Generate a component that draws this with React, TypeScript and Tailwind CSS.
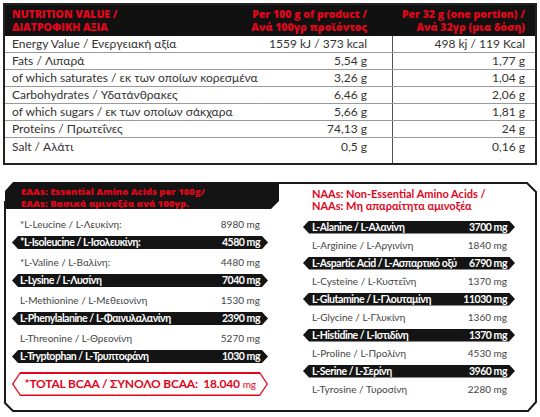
import React from 'react';

const nutrition = [
  ['Energy Value / Ενεργειακή αξία', '1559 kJ / 373 kcal', '498 kj / 119 Kcal'],
  ['Fats / Λιπαρά', '5,54 g', '1,77 g'],
  ['of which saturates / εκ των οποίων κορεσμένα', '3,26 g', '1,04 g'],
  ['Carbohydrates / Υδατάνθρακες', '6,46 g', '2,06 g'],
  ['of which sugars / εκ των οποίων σάκχαρα', '5,66 g', '1,81 g'],
  ['Proteins / Πρωτεΐνες', '74,13 g', '24 g'],
  ['Salt / Αλάτι', '0,5 g', '0,16 g'],
];

const eaas: [string, string, boolean][] = [
  ['*L-Leucine / L-Λευκίνη:', '8980 mg', false],
  ['*L-Isoleucine / L-Ισολευκίνη:', '4580 mg', true],
  ['*L-Valine  / L-Βαλίνη:', '4480 mg', false],
  ['L-Lysine / L-Λυσίνη', '7040 mg', true],
  ['L-Methionine / L-Μεθειονίνη', '1530 mg', false],
  ['L-Phenylalanine / L-Φαινυλαλανίνη', '2390 mg', true],
  ['L-Threonine / L-Θρεονίνη', '5270 mg', false],
  ['L-Tryptophan / L-Τρυπτοφάνη', '1030 mg', true],
];

const naas: [string, string, boolean][] = [
  ['L-Alanine / L-Αλανίνη', '3700 mg', true],
  ['L-Arginine / L-Αργινίνη', '1840 mg', false],
  ['L-Aspartic Acid / L-Ασπαρτικό οξύ', '6790 mg', true],
  ['L-Cysteine / L-Κυστεΐνη', '1370 mg', false],
  ['L-Glutamine / L-Γλουταμίνη', '11030 mg', true],
  ['L-Glycine / L-Γλυκίνη', '1360 mg', false],
  ['L-Histidine / L-Ιστιδίνη', '1370 mg', true],
  ['L-Proline / L-Προλίνη', '4530 mg', false],
  ['L-Serine / L-Σερίνη', '3960 mg', true],
  ['L-Tyrosine / Τυροσίνη', '2280 mg', false],
];

function AminoRow({ label, value, dark, h, pad }: { label: string; value: string; dark: boolean; h: string; pad: string }) {
  if (dark) {
    return (
      <div className={`${h} flex items-center`}>
        <div className={`flex h-[13px] w-full items-center justify-between bg-[#141414] ${pad} whitespace-nowrap text-[10.5px] font-bold leading-none tracking-[-0.45px] text-white [clip-path:polygon(6px_0,calc(100%_-_6px)_0,100%_50%,calc(100%_-_6px)_100%,6px_100%,0_50%)]`}>
          <span>{label}</span>
          <span>{value}</span>
        </div>
      </div>
    );
  }
  return (
    <div className={`${h} flex items-center justify-between ${pad} whitespace-nowrap text-[10px] leading-none text-[#444]`}>
      <span>{label}</span>
      <span>{value}</span>
    </div>
  );
}

export default function App() {
  return (
    <div className="h-[417px] w-[540px] overflow-hidden bg-white font-['Lato',sans-serif]">
      {/* Nutrition table */}
      <div className="mx-[3px] mt-[3px] border-2 border-[#222]">
        <div className="flex h-[31px] items-center bg-[#111] font-['Open_Sans',sans-serif] text-[10.5px] font-extrabold leading-[13px] text-[#e2061b]">
          <div className="flex flex-1 justify-between pl-[7px] pr-[25px]">
            <div>NUTRITION VALUE /<br />ΔΙΑΤΡΟΦΙΚΗ ΑΞΙΑ</div>
            <div className="text-right">Per 100 g of product /<br />Ανά 100γρ προϊόντος</div>
          </div>
          <div className="w-[143px] pr-[10px] text-right">Per 32 g (one portion) /<br />Ανά 32γρ (μια δόση)</div>
        </div>
        {nutrition.map(([label, a, b], i) => (
          <div key={label} className={`flex h-[17px] text-[12px] leading-none text-[#333] ${i < nutrition.length - 1 ? 'border-b border-[#9a9a9a]' : ''}`}>
            <div className="flex flex-1 items-center justify-between pl-[7px] pr-[25px]">
              <span>{label}</span>
              <span>{a}</span>
            </div>
            <div className="flex w-[143px] items-center justify-end border-l border-[#555] pr-[10px]">{b}</div>
          </div>
        ))}
        <div className="flex h-[8px]">
          <div className="flex-1" />
          <div className="w-[143px] border-l border-[#555]" />
        </div>
      </div>

      {/* Amino acids panel */}
      <div className="relative mt-[16px] h-[234px]">
        <svg className="absolute inset-0" width="540" height="234" viewBox="0 0 540 234" fill="none">
          <polygon points="13,1 279,1 279,20 271,28 5,28 5,10" fill="#141414" />
          <path d="M279 2 H527 L536 11 V221 L528 230 H13 L5 222 V20" stroke="#1a1a1a" strokeWidth="2" />
        </svg>
        <div className="relative flex">
          <div className="w-[272px]">
            <div className="h-[33px] pl-[21px] pt-[5px] font-['Open_Sans',sans-serif] text-[9.5px] font-extrabold leading-[12px] text-[#e2061b]">
              EAAs: Essential Amino Acids per 100g/<br />EAAs: Βασικά αμινοξέα ανά 100γρ.
            </div>
            <div className="ml-[12px] w-[256px]">
              {eaas.map(([l, v, d]) => (
                <AminoRow key={l} label={l} value={v} dark={d} h="h-[19px]" pad="pl-[8px] pr-[8px]" />
              ))}
              <div className="mt-[6px] h-[24px] bg-[#e2061b] p-[1.5px] [clip-path:polygon(8px_0,calc(100%_-_8px)_0,100%_50%,calc(100%_-_8px)_100%,8px_100%,0_50%)]">
                <div className="flex h-full items-center whitespace-nowrap bg-white pl-[11px] text-[12px] font-bold leading-none tracking-[-0.2px] text-[#e2061b] [clip-path:polygon(7px_0,calc(100%_-_7px)_0,100%_50%,calc(100%_-_7px)_100%,7px_100%,0_50%)]">
                  *TOTAL BCAA / ΣΥΝΟΛΟ BCAA:&nbsp;&nbsp;18.040<span className="ml-[3px] text-[10px] font-normal">mg</span>
                </div>
              </div>
            </div>
          </div>
          <div className="flex-1">
            <div className="h-[37px] pl-[40px] pt-[7px] text-[11px] font-bold leading-[11.5px] text-[#e2061b]">
              NAAs: Non-Essential Amino Acids /<br />NAAs: Μη απαραίτητα αμινοξέα
            </div>
            <div className="ml-[31px] w-[212px]">
              {naas.map(([l, v, d]) => (
                <AminoRow key={l} label={l} value={v} dark={d} h="h-[18px]" pad="pl-[9px] pr-[8px]" />
              ))}
            </div>
          </div>
        </div>
      </div>
    </div>
  );
}
